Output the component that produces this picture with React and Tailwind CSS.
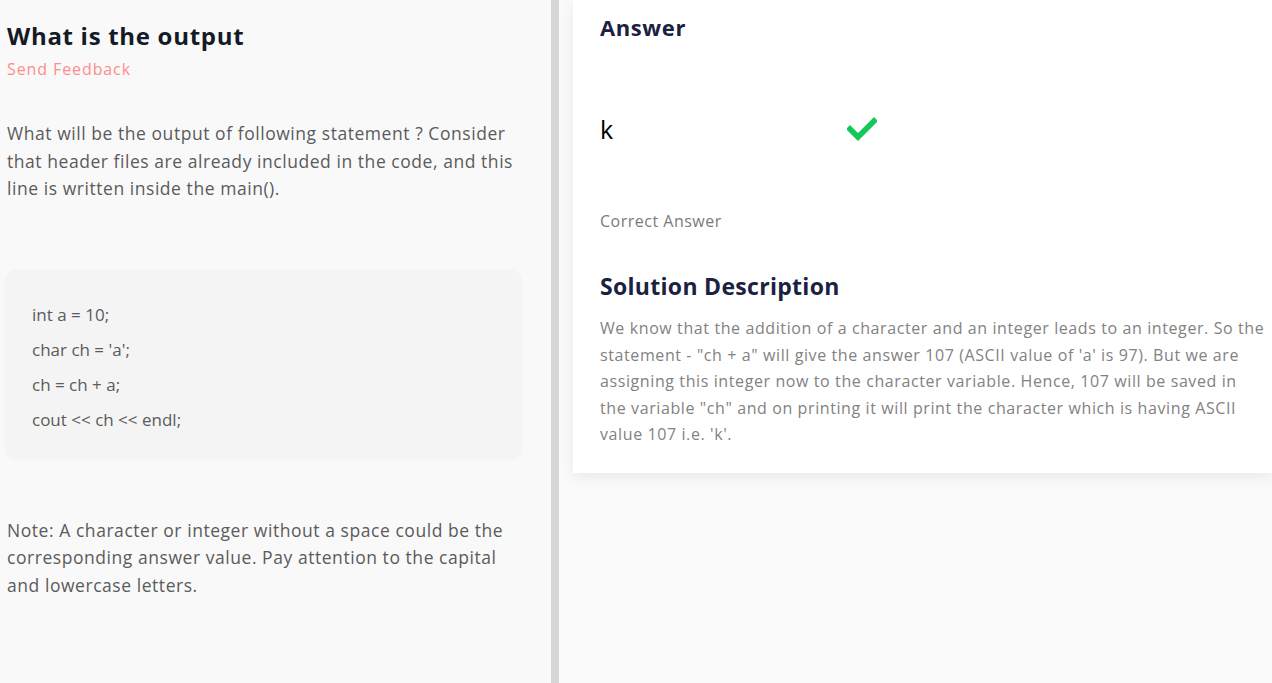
export default function App() {
  const font = { fontFamily: '"Open Sans", "Noto Sans", sans-serif' };
  return (
    <div className="flex h-[683px] w-[1272px] overflow-hidden bg-[#fafafa]" style={font}>
      {/* left: question */}
      <div className="w-[551px] shrink-0 bg-[#f9f9f9] pl-[7px] pr-[30px] pt-[20px]">
        <h1 className="text-[24px] font-bold leading-[32px] tracking-[0.7px] text-[#141a26]">What is the output</h1>
        <p className="mt-[6px] text-[16px] leading-[22px] tracking-[0.9px] text-[#ff8c8c]">Send Feedback</p>
        <p className="mt-[40px] text-[17.5px] leading-[27.5px] tracking-[0.55px] text-[#5b5b5b]">
          What will be the output of following statement ? Consider that header files are already included in the code, and this line is written inside the main().
        </p>
        <div className="mt-[68px] -ml-[1px] w-[515px] rounded-[10px] bg-[#f4f4f4] pl-[26px] pt-[26px] pb-[22px] text-[17px] text-[#5b5b5b] shadow-[0_0_4px_rgba(0,0,0,0.04)]">
          <p className="leading-[35px]">int a = 10;</p>
          <p className="leading-[35px]">char ch = 'a';</p>
          <p className="leading-[35px]">ch = ch + a;</p>
          <p className="leading-[35px]">cout &lt;&lt; ch &lt;&lt; endl;</p>
        </div>
        <p className="mt-[58px] text-[17.5px] leading-[27.5px] tracking-[0.55px] text-[#5b5b5b]">
          Note: A character or integer without a space could be the corresponding answer value. Pay attention to the capital and lowercase letters.
        </p>
      </div>
      {/* divider */}
      <div className="w-[8px] shrink-0 bg-[#d6d6d6]" />
      {/* right: answer */}
      <div className="flex-1 pl-[14px]">
        <div className="bg-white pl-[27px] pr-[6px] pt-[12px] pb-[25px] shadow-[0_4px_14px_rgba(0,0,0,0.07)]">
          <h2 className="text-[22px] font-bold leading-[30px] tracking-[0.6px] text-[#1b2140]">Answer</h2>
          <div className="mt-[72px] flex items-center">
            <span className="w-[247px] text-[25px] leading-[30px] text-black">k</span>
            <svg width="30" height="24" viewBox="0 0 30 24" className="-mt-[0px]">
              <path d="M3 12 L11 20 L27 4" fill="none" stroke="#14c75a" strokeWidth="5.5" strokeLinecap="square" />
            </svg>
          </div>
          <p className="mt-[66px] text-[16px] leading-[22px] tracking-[0.5px] text-[#7b7b7b]">Correct Answer</p>
          <h2 className="mt-[39px] text-[23px] font-bold leading-[30px] tracking-[0.3px] text-[#1b2140]">Solution Description</h2>
          <p className="mt-[14px] text-[16px] leading-[26.5px] tracking-[0.6px] text-[#828282]">
            We know that the addition of a character and an integer leads to an integer. So the statement - "ch + a" will give the answer 107 (ASCII value of 'a' is 97). But we are assigning this integer now to the character variable. Hence, 107 will be saved in the variable "ch" and on printing it will print the character which is having ASCII value 107 i.e. 'k'.
          </p>
        </div>
      </div>
    </div>
  );
}
